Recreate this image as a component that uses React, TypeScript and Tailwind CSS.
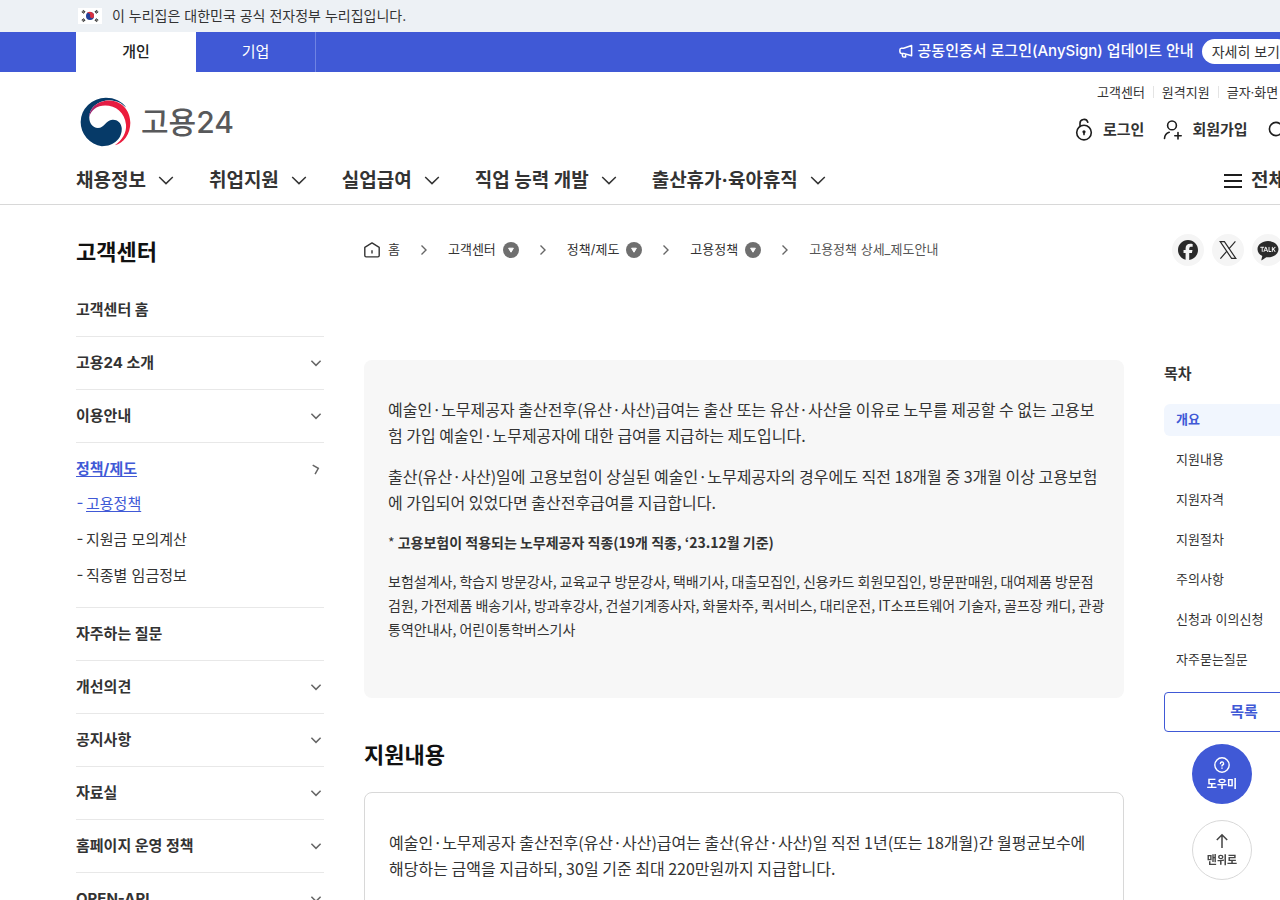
import { FaFacebook } from "react-icons/fa6";
import { RiKakaoTalkFill } from "react-icons/ri";
import { Link2, X } from "lucide-react";

const gnb = ["채용정보", "취업지원", "실업급여", "직업 능력 개발", "출산휴가·육아휴직"];

const crumbs = ["고객센터", "정책/제도", "고용정책"];

const toc = ["개요", "지원내용", "지원자격", "지원절차", "주의사항", "신청과 이의신청", "자주묻는질문"];

type LnbItem = {
    label: string;
    arrow?: boolean;
    children?: string[];
};

const lnb: LnbItem[] = [
    { label: "고객센터 홈" },
    { label: "고용24 소개", arrow: true },
    { label: "이용안내", arrow: true },
    { label: "정책/제도", arrow: true, children: ["고용정책", "지원금 모의계산", "직종별 임금정보"] },
    { label: "자주하는 질문" },
    { label: "개선의견", arrow: true },
    { label: "공지사항", arrow: true },
    { label: "자료실", arrow: true },
    { label: "홈페이지 운영 정책", arrow: true },
    { label: "OPEN-API", arrow: true },
];

const container = "mx-auto w-full max-w-[1400px] px-[76px]";

const Flag = () => (
    <svg viewBox="0 0 24 16" className="w-6 h-4" aria-hidden="true">
        <rect width="24" height="16" fill="#fff" />
        <circle cx="12" cy="8" r="4" fill="#22409a" />
        <path d="M8.4 6.2A4 4 0 0 1 16 8.4A2 2 0 0 1 12 8A2 2 0 0 0 8.4 6.2Z" fill="#d8303f" />
        <g stroke="#222" strokeWidth="3" strokeDasharray="1 0.4">
            <path d="M6.6 4.6L4.2 2.9M17.4 4.6L19.8 2.9M6.6 11.4L4.2 13.1M17.4 11.4L19.8 13.1" />
        </g>
    </svg>
);

const Taegeuk = () => (
    <svg viewBox="60 289 154 150" className="w-[51px] h-[50px]" aria-hidden="true">
        <defs>
            <linearGradient id="red" x1="0" y1="0" x2="1" y2="0">
                <stop offset="0" stopColor="#8d2a7c" />
                <stop offset="0.3" stopColor="#e31c45" />
                <stop offset="1" stopColor="#ee1c3b" />
            </linearGradient>
        </defs>
        <path
            d="M200 321C186 301 164 291 138 291A76 73 0 0 0 62 364A73 73 0 0 0 126 437C164 437 188 412 186 382C184 365 172 356 158 357C138 358 134 382 114 382C98 382 88 368 88 350C88 318 118 298 150 298C170 299 186 306 200 321Z"
            fill="#063a68"
        />
        <path
            d="M88 350C88 318 118 299 148 299C185 300 212 328 212 366C212 400 192 428 165 434C188 418 201 395 199 372C195 335 168 314 136 314C112 314 92 328 88 350Z"
            fill="url(#red)"
        />
    </svg>
);

const Megaphone = () => (
    <svg viewBox="0 0 14 14" className="w-[14px] h-[14px]" fill="none" stroke="currentColor" strokeWidth="1.5" strokeLinejoin="round" aria-hidden="true">
        <path d="M4.6 4.2L12.6 1.5V11.8L4.6 9.4H2.4A1.6 1.6 0 0 1 .9 7.8V5.8A1.6 1.6 0 0 1 2.4 4.2Z" />
        <path d="M3.4 9.6V11.4A1.6 1.6 0 0 0 5 13H6.6V10.2" />
    </svg>
);

const LockIcon = () => (
    <svg viewBox="0 0 24 24" className="w-6 h-6" fill="none" stroke="#1d1d1d" strokeWidth="1.6" strokeLinecap="round" aria-hidden="true">
        <circle cx="12" cy="14.6" r="7.3" />
        <path d="M8 8V5.6A4 4 0 0 1 15.8 4.2" />
        <circle cx="12" cy="13.8" r="1.6" fill="#1d1d1d" stroke="none" />
        <path d="M12 14V16.6" />
    </svg>
);

const JoinIcon = () => (
    <svg viewBox="0 0 24 24" className="w-6 h-6" fill="none" stroke="#1d1d1d" strokeWidth="1.6" strokeLinecap="round" aria-hidden="true">
        <circle cx="11" cy="7.4" r="4.4" />
        <path d="M3.5 20.5C3.7 17.4 5.5 15.2 8.2 14.3M13.8 17.8H20.2M17 14.6V21" />
    </svg>
);

const SearchIcon = () => (
    <svg viewBox="0 0 24 24" className="w-6 h-6" fill="none" stroke="#1d1d1d" strokeWidth="1.6" strokeLinecap="round" aria-hidden="true">
        <circle cx="11" cy="11" r="6.6" />
        <path d="M16 16L20.5 20.5" />
    </svg>
);

const HomeIcon = () => (
    <svg viewBox="0 0 16 16" className="w-4 h-4" fill="none" stroke="#333" strokeWidth="1.4" strokeLinejoin="round" aria-hidden="true">
        <path d="M.8 5.4L8 .9L15.2 5.4V13.6A1.3 1.3 0 0 1 13.9 14.9H2.1A1.3 1.3 0 0 1 .8 13.6Z" />
        <path d="M8 8.2V11.6" />
    </svg>
);

const CrumbArrow = () => (
    <svg viewBox="0 0 16 16" className="w-4 h-4 mx-4" fill="none" stroke="#666" strokeWidth="1.4" aria-hidden="true">
        <path d="M5.5 3.5L10 8L5.5 12.5" />
    </svg>
);

const MoreDot = () => (
    <svg viewBox="0 0 16 16" className="w-4 h-4" aria-hidden="true">
        <circle cx="8" cy="8" r="8" fill="#6f6f6f" />
        <path d="M5.6 6.2H10.4L8 10.2Z" fill="#fff" stroke="#fff" strokeLinejoin="round" />
    </svg>
);

const XLogo = () => (
    <svg viewBox="0 0 20 20" className="w-5 h-5" fill="none" stroke="currentColor" strokeWidth="1.2" aria-hidden="true">
        <path d="M2.2 1.6H6.4L17.8 18.4H13.6Z" />
        <path d="M17.4 1.4L10.9 8.8M8.9 11.2L2.4 18.6" />
    </svg>
);

const LnbArrow = ({ open }: { open: boolean }) => (
    <svg viewBox="0 0 16 16" className={open ? "w-4 h-4 -rotate-[105deg]" : "w-4 h-4"} fill="none" stroke="#666" strokeWidth="1.5" aria-hidden="true">
        <path d="M3.4 5.8L8 10.4L12.6 5.8" />
    </svg>
);

const TopBanner = () => {
    return (
        <div className="bg-[#edf1f5]">
            <div className={`${container} h-8 flex items-center`}>
                <div className="pl-[2px] flex items-center gap-[10px]">
                    <Flag />
                    <span className="text-[14px] leading-5">이 누리집은 대한민국 공식 전자정부 누리집입니다.</span>
                </div>
            </div>
        </div>
    );
};

const MemberBar = () => {
    return (
        <div className="bg-[#4059d6] text-white">
            <div className={`${container} h-10 flex justify-between`}>
                <div className="flex text-[15px]">
                    <a href="#" className="w-[120px] flex items-center justify-center bg-white text-[#222] font-medium">개인</a>
                    <a href="#" className="w-[120px] flex items-center justify-center border-r border-[#6f83e3]">기업</a>
                </div>
                <div className="flex items-center pb-[2px]">
                    <Megaphone />
                    <span className="ml-[5px] text-[15px] font-medium">공동인증서 로그인(AnySign) 업데이트 안내</span>
                    <a href="#" className="ml-2 h-[25px] px-[10px] flex items-center rounded-full bg-white text-[#333] text-[14px]">자세히 보기</a>
                    <button type="button" aria-label="닫기" className="ml-[10px] w-6 h-6 flex items-center justify-center">
                        <X size={18} />
                    </button>
                </div>
            </div>
        </div>
    );
};

const Header = () => {
    return (
        <header className="border-b border-[#d8d8d8]">
            <div className={container}>
                <div className="h-[84px] flex justify-between">
                    <a href="#" className="pl-1 pt-4 flex items-center gap-[10px] self-center">
                        <Taegeuk />
                        <span className="text-[30px] leading-8 font-medium text-[#58595b]">고용24</span>
                    </a>
                    <div className="w-[248px] pt-[10px]">
                        <div className="pl-[21px] flex items-center text-[13px] leading-5 whitespace-nowrap">
                            <a href="#">고객센터</a>
                            <span className="mx-2 w-px h-3 bg-[#e4e4e4]" />
                            <a href="#">원격지원</a>
                            <span className="mx-2 w-px h-3 bg-[#e4e4e4]" />
                            <a href="#">글자·화면 설정</a>
                        </div>
                        <div className="mt-4 -ml-1 flex items-center text-[15px] leading-6 font-bold whitespace-nowrap">
                            <a href="#" className="flex items-center gap-[7px]"><LockIcon />로그인</a>
                            <a href="#" className="ml-[17px] flex items-center gap-[7px]"><JoinIcon />회원가입</a>
                            <a href="#" className="ml-[17px] flex items-center gap-[7px]"><SearchIcon />검색</a>
                        </div>
                    </div>
                </div>
                <nav className="h-12 pt-[2px] flex items-center justify-between text-[19px] font-bold">
                    <ul className="flex gap-[31px]">
                        {gnb.map((item) => (
                            <li key={item}>
                                <a href="#" className="flex items-center gap-2">
                                    {item}
                                    <svg viewBox="0 0 24 24" className="w-6 h-6" fill="none" stroke="#333" strokeWidth="1.5" aria-hidden="true">
                                        <path d="M5.2 8L12 14.6L18.8 8" />
                                    </svg>
                                </a>
                            </li>
                        ))}
                    </ul>
                    <button type="button" className="pr-[3px] flex items-center gap-[9px]">
                        <svg viewBox="0 0 18 16" className="w-[18px] h-4" stroke="#1d1d1d" strokeWidth="2" aria-hidden="true">
                            <path d="M0 2H18M0 8H18M0 14H18" />
                        </svg>
                        전체메뉴
                    </button>
                </nav>
            </div>
        </header>
    );
};

const Sidebar = () => {
    return (
        <aside className="w-[248px] shrink-0">
            <h2 className="text-[22px] leading-9 font-bold text-[#111]">고객센터</h2>
            <ul className="mt-[14px]">
                {lnb.map((item) => (
                    <li key={item.label} className="border-b border-[#e8e8e8]">
                        <a
                            href="#"
                            className={
                                item.children
                                    ? "pt-[14px] pb-[5px] flex items-center justify-between text-[15px] leading-6 font-bold text-[#4059d6]"
                                    : "py-[14px] flex items-center justify-between text-[15px] leading-6 font-bold"
                            }
                        >
                            <span className={item.children ? "underline underline-offset-2" : ""}>{item.label}</span>
                            {item.arrow && <LnbArrow open={!!item.children} />}
                        </a>
                        {item.children && (
                            <ul className="pb-[13px]">
                                {item.children.map((child, i) => (
                                    <li key={child} className={i === 0 ? "h-9 flex items-center gap-[2px] text-[15px] text-[#4059d6]" : "h-9 flex items-center gap-[2px] text-[15px]"}>
                                        <span className="w-2 pb-[2px] text-center">-</span>
                                        <a href="#" className={i === 0 ? "underline underline-offset-2" : ""}>{child}</a>
                                    </li>
                                ))}
                            </ul>
                        )}
                    </li>
                ))}
            </ul>
        </aside>
    );
};

const Breadcrumb = () => {
    return (
        <div className="h-8 flex items-center justify-between">
            <nav className="flex items-center text-[13px]">
                <a href="#" className="flex items-center gap-2"><HomeIcon />홈</a>
                {crumbs.map((item) => (
                    <span key={item} className="flex items-center">
                        <CrumbArrow />
                        <button type="button" className="flex items-center gap-[7px]">{item}<MoreDot /></button>
                    </span>
                ))}
                <CrumbArrow />
                <span className="text-[#555]">고용정책 상세_제도안내</span>
            </nav>
            <div className="flex gap-2 text-[#2b2b2b]">
                <a href="#" aria-label="페이스북" className="w-8 h-8 flex items-center justify-center rounded-full bg-[#f5f5f5]"><FaFacebook size={20} /></a>
                <a href="#" aria-label="엑스" className="w-8 h-8 flex items-center justify-center rounded-full bg-[#f5f5f5]"><XLogo /></a>
                <a href="#" aria-label="카카오톡" className="w-8 h-8 flex items-center justify-center rounded-full bg-[#f5f5f5]"><RiKakaoTalkFill size={24} /></a>
                <a href="#" aria-label="링크 복사" className="w-8 h-8 flex items-center justify-center rounded-full bg-[#f5f5f5]"><Link2 size={20} /></a>
            </div>
        </div>
    );
};

const Article = () => {
    return (
        <main className="flex-1 min-w-0 font-['Noto_Sans_CJK_KR',sans-serif]">
            <section className="rounded-lg bg-[#f7f7f7] pl-6 pr-4 pt-9 pb-[57px] flex flex-col gap-[15px] text-[16px] leading-[26px]">
                <p>예술인·노무제공자 출산전후(유산·사산)급여는 출산 또는 유산·사산을 이유로 노무를 제공할 수 없는 고용보험 가입 예술인·노무제공자에 대한 급여를 지급하는 제도입니다.</p>
                <p>출산(유산·사산)일에 고용보험이 상실된 예술인·노무제공자의 경우에도 직전 18개월 중 3개월 이상 고용보험에 가입되어 있었다면 출산전후급여를 지급합니다.</p>
                <p className="text-[14px] leading-6">* <strong>고용보험이 적용되는 노무제공자 직종(19개 직종, ‘23.12월 기준)</strong></p>
                <p className="text-[14px] leading-6">
                    보험설계사, 학습지 방문강사, 교육교구 방문강사, 택배기사, 대출모집인, 신용카드 회원모집인, 방문판매원, 대여제품 방문점<br />
                    검원, 가전제품 배송기사, 방과후강사, 건설기계종사자, 화물차주, 퀵서비스, 대리운전, IT소프트웨어 기술자, 골프장 캐디, 관광<br />
                    통역안내사, 어린이통학버스기사
                </p>
            </section>
            <h3 className="mt-[39px] mb-[23px] text-[22px] leading-8 font-bold text-[#111]">지원내용</h3>
            <section className="rounded-lg border border-[#d8d8d8] px-6 pt-9 pb-14 text-[16px] leading-[26px]">
                <p>예술인·노무제공자 출산전후(유산·사산)급여는 출산(유산·사산)일 직전 1년(또는 18개월)간 월평균보수에 해당하는 금액을 지급하되, 30일 기준 최대 220만원까지 지급합니다.</p>
            </section>
        </main>
    );
};

const Toc = () => {
    return (
        <aside className="w-[160px] shrink-0">
            <h3 className="text-[15px] leading-7 font-bold">목차</h3>
            <ul className="mt-4 flex flex-col gap-2 text-[13px]">
                {toc.map((item, i) => (
                    <li key={item}>
                        <a
                            href="#"
                            className={
                                i === 0
                                    ? "h-8 px-3 flex items-center rounded-md bg-[#f1f6fe] font-bold text-[#4059d6]"
                                    : "h-8 px-3 flex items-center"
                            }
                        >
                            {item}
                        </a>
                    </li>
                ))}
            </ul>
            <button type="button" className="mt-4 w-full h-10 rounded-[4px] border border-[#4059d6] text-[15px] font-bold text-[#4059d6]">목록</button>
        </aside>
    );
};

const QuickButtons = () => {
    return (
        <div className="fixed right-7 bottom-5 flex flex-col gap-4 text-[11px] leading-4 font-bold">
            <button type="button" className="w-[60px] h-[60px] flex flex-col items-center justify-center gap-[3px] rounded-full bg-[#4059d6] text-white">
                <svg viewBox="0 0 16 16" className="w-4 h-4" fill="none" stroke="currentColor" strokeWidth="1.4" strokeLinecap="round" aria-hidden="true">
                    <circle cx="8" cy="8" r="7.2" />
                    <path d="M6.4 6.6A1.6 1.6 0 1 1 8.6 8C8.1 8.2 8 8.5 8 9M8 11V11.2" />
                </svg>
                도우미
            </button>
            <button type="button" className="w-[60px] h-[60px] flex flex-col items-center justify-center gap-[3px] rounded-full border border-[#d8d8d8] bg-white text-[#444]">
                <svg viewBox="0 0 16 16" className="w-4 h-4" fill="none" stroke="currentColor" strokeWidth="1.5" aria-hidden="true">
                    <path d="M8 15V2M2.8 7L8 1.8L13.2 7" />
                </svg>
                맨위로
            </button>
        </div>
    );
};

const App = () => {
    return (
        <div className="overflow-x-hidden bg-white text-[#333] font-['Inter','Noto_Sans_CJK_KR',sans-serif]">
            <div className="min-w-[1400px]">
                <TopBanner />
                <MemberBar />
                <Header />
                <div className={`${container} pt-[29px] pb-20 flex gap-10`}>
                    <Sidebar />
                    <div className="flex-1 min-w-0">
                        <Breadcrumb />
                        <div className="mt-[94px] flex gap-10">
                            <Article />
                            <Toc />
                        </div>
                    </div>
                </div>
            </div>
            <QuickButtons />
        </div>
    );
};

export default App;
